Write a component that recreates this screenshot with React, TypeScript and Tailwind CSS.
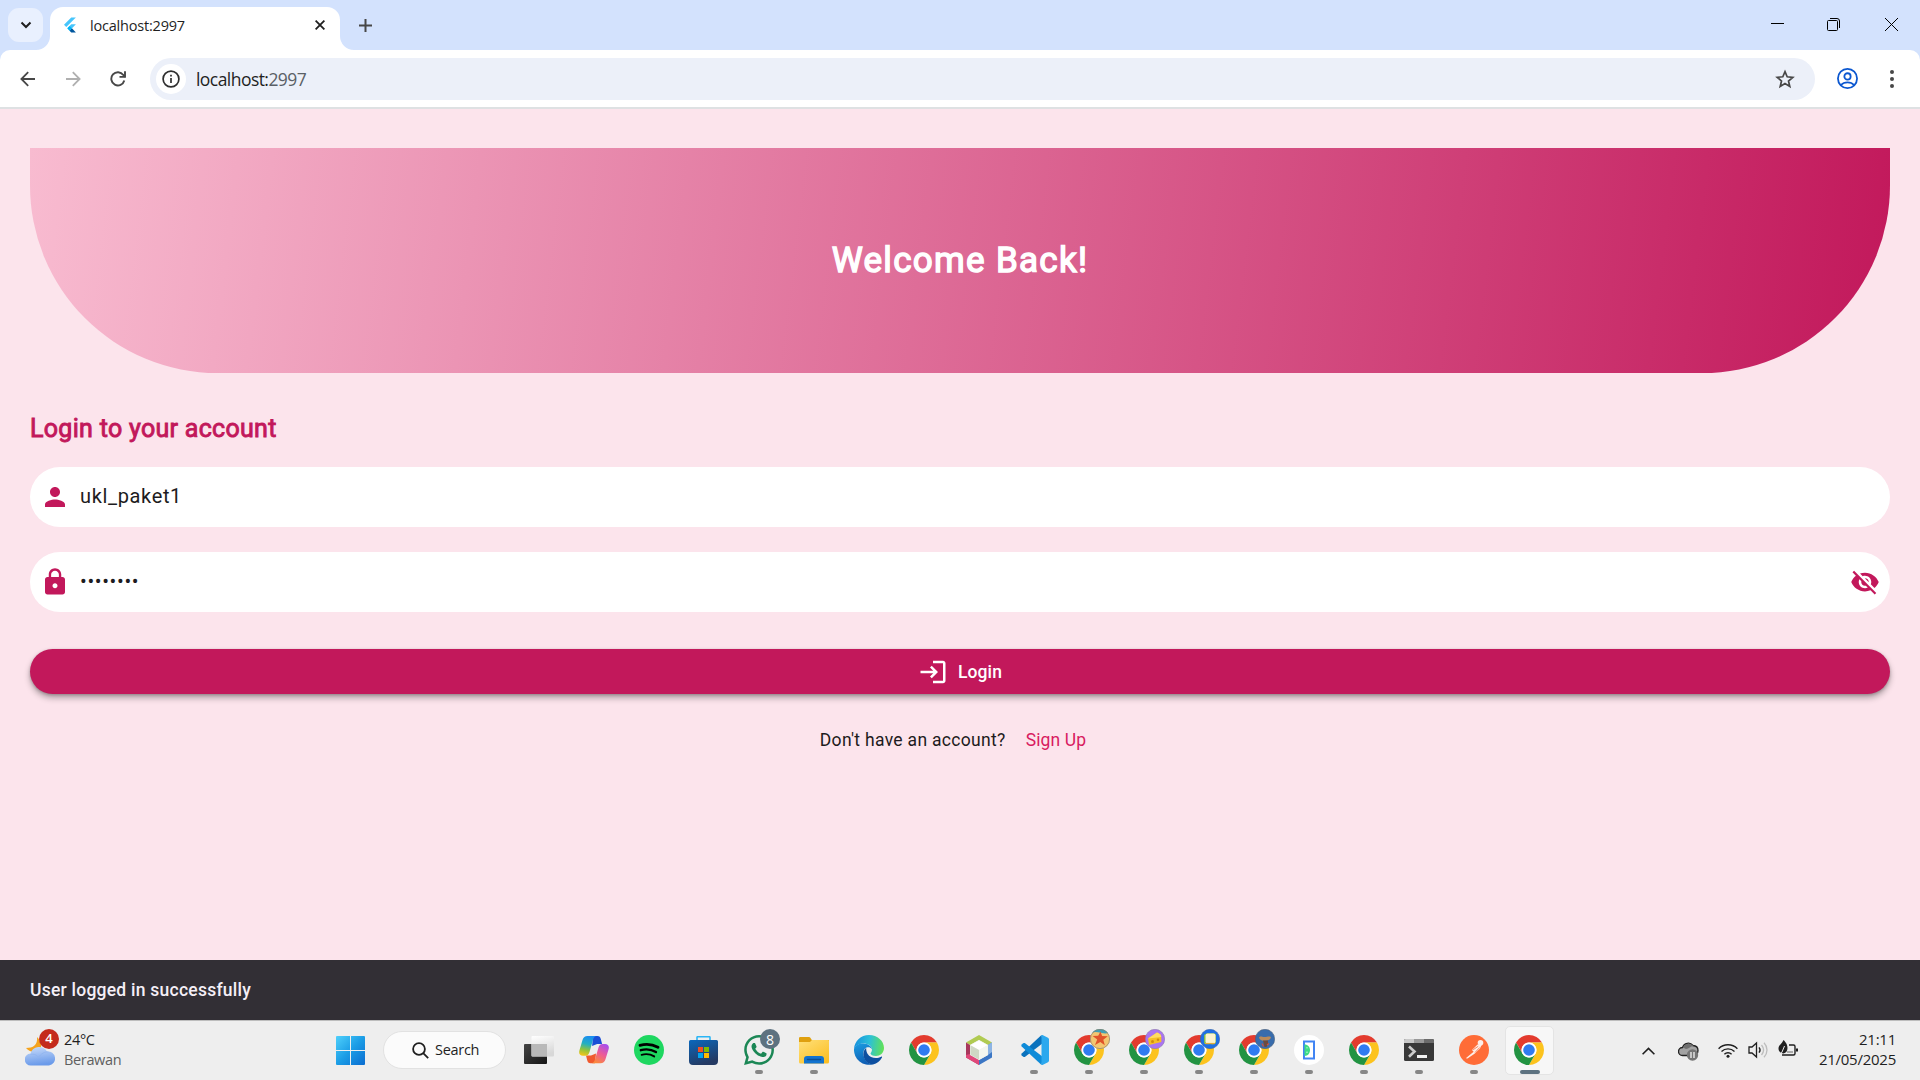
import type { ReactNode } from "react";

const segoe = "font-['Open_Sans','Noto_Sans',sans-serif]";

function MaterialIcon({ d, className = "" }: { d: string; className?: string }) {
  return (
    <svg viewBox="0 0 24 24" className={`size-[30px] shrink-0 fill-current ${className}`}>
      <path d={d} />
    </svg>
  );
}

const person =
  "M12 12c2.21 0 4-1.79 4-4s-1.79-4-4-4-4 1.79-4 4 1.79 4 4 4zm0 2c-2.67 0-8 1.34-8 4v2h16v-2c0-2.66-5.33-4-8-4z";
const lock =
  "M18 8h-1V6c0-2.76-2.24-5-5-5S7 3.24 7 6v2H6c-1.1 0-2 .9-2 2v10c0 1.1.9 2 2 2h12c1.1 0 2-.9 2-2V10c0-1.1-.9-2-2-2zm-6 9c-1.1 0-2-.9-2-2s.9-2 2-2 2 .9 2 2-.9 2-2 2zm3.1-9H8.9V6c0-1.71 1.39-3.1 3.1-3.1 1.71 0 3.1 1.39 3.1 3.1v2z";
const visibilityOff =
  "M12 7c2.76 0 5 2.24 5 5 0 .65-.13 1.26-.36 1.83l2.92 2.92c1.51-1.26 2.7-2.89 3.43-4.75-1.73-4.39-6-7.5-11-7.5-1.4 0-2.74.25-3.98.7l2.16 2.16C10.74 7.13 11.35 7 12 7zM2 4.27l2.28 2.28.46.46C3.08 8.3 1.78 10.02 1 12c1.73 4.39 6 7.5 11 7.5 1.55 0 3.03-.3 4.38-.84l.42.42L19.73 22 21 20.73 3.27 3 2 4.27zM7.53 9.8l1.55 1.55c-.05.21-.08.43-.08.65 0 1.66 1.34 3 3 3 .22 0 .44-.03.65-.08l1.55 1.55c-.67.33-1.41.53-2.2.53-2.76 0-5-2.24-5-5 0-.79.2-1.53.53-2.2zm4.31-.78l3.15 3.15.02-.16c0-1.66-1.34-3-3-3l-.17.01z";
const login =
  "M11 7L9.6 8.4l2.6 2.6H2v2h10.2l-2.6 2.6L11 17l5-5-5-5zm9 12h-8v2h8c1.1 0 2-.9 2-2V5c0-1.1-.9-2-2-2h-8v2h8v14z";

function TabStrip() {
  return (
    <div className="flex h-[50px] items-start bg-[#d3e2fd]">
      <div className="mt-2 ml-2 flex h-[34px] w-[35px] items-center justify-center rounded-[11px] bg-[#e9f0fe]">
        <svg viewBox="0 0 12 8" className="h-2 w-3 fill-none stroke-[#1f1f1f] stroke-2">
          <path d="M1.5 1.5 6 6l4.500-4.500" />
        </svg>
      </div>
      <div className="relative mt-[7px] ml-[7px] flex h-[43px] w-[290px] items-center rounded-t-[13px] bg-white">
        <svg viewBox="0 0 14 14" className="absolute bottom-0 -left-[14px] size-[14px] fill-white">
          <path d="M14 0v14H0A14 14 0 0 0 14 0z" />
        </svg>
        <svg viewBox="0 0 14 14" className="absolute -right-[14px] bottom-0 size-[14px] fill-white">
          <path d="M0 0v14h14A14 14 0 0 1 0 0z" />
        </svg>
        <svg viewBox="0 0 24 30" className="-mt-[1px] mb-[7px] ml-[14px] h-[16px] w-[12px]">
          <path d="M14.500 0 0 14.500l4.600 4.600L23.700 0z" fill="#47c5fb" />
          <path d="M14.500 13.700 6.600 21.600l4.600 4.700 12.600-12.600z" fill="#47c5fb" />
          <path d="m11.200 26.300 3.300 3.700h9.300l-8-8.400z" fill="#00569e" />
          <path d="m6.600 21.700 4.600-4.700 4.600 4.700-4.600 4.600z" fill="#00b5f8" />
        </svg>
        <span className={`${segoe} mb-[6px] ml-[14px] flex-1 text-[14.500px] tracking-[-0.2px] text-[#1f1f1f]`}>
          localhost:2997
        </span>
        <svg viewBox="0 0 10 10" className="mr-[15px] mb-[7px] size-[10px] stroke-[#1f1f1f] stroke-[1.8]">
          <path d="m.6.6 8.800 8.800M9.400.6.6 9.400" />
        </svg>
      </div>
      <svg viewBox="0 0 13 13" className="mt-[19px] ml-[19px] size-[13px] stroke-[#474747] stroke-2">
        <path d="M6.500 0v13M0 6.500h13" />
      </svg>
      <div className="mt-[18px] ml-auto flex items-start pr-[22px] text-black">
        <svg viewBox="0 0 13 13" className="mr-[43px] size-[13px] stroke-current">
          <path d="M0 5.500h13" />
        </svg>
        <svg viewBox="0 0 13 13" className="mr-[45px] size-[13px] fill-none stroke-current">
          <rect x=".5" y="2.500" width="10" height="10" rx="1" />
          <path d="M3 .5h7A2.500 2.500 0 0 1 12.500 3v7" />
        </svg>
        <svg viewBox="0 0 13 13" className="size-[13px] stroke-current">
          <path d="m0 0 13 13M13 0 0 13" />
        </svg>
      </div>
    </div>
  );
}

function Toolbar() {
  return (
    <div className="bg-[#d3e2fd]">
      <div className="flex h-[57px] items-center rounded-t-[10px] bg-white">
        <svg viewBox="0 0 16 16" className="ml-5 size-4 fill-none stroke-[#474747] stroke-[1.8]">
          <path d="M15 8H2M8.200 1.200 1.400 8l6.800 6.800" />
        </svg>
        <svg viewBox="0 0 16 16" className="ml-[29px] size-4 fill-none stroke-[#b0b0b0] stroke-[1.8]">
          <path d="M1 8h13M7.800 1.200 14.600 8l-6.800 6.800" />
        </svg>
        <svg viewBox="0 0 16 16" className="ml-[29px] size-4 fill-none stroke-[#474747] stroke-[1.9]">
          <path d="M14.300 9.500A6.600 6.600 0 1 1 13.300 4L15 5.800" />
          <path d="M15 .3v5.600H9.500" />
        </svg>
        <div className="ml-[24px] flex h-[42px] w-[1665px] items-center rounded-full bg-[#ecf0f9]">
          <div className="ml-[6px] flex size-[30px] items-center justify-center rounded-full bg-white">
            <svg viewBox="0 0 18 18" className="size-[18px] fill-none stroke-[#2f2f2f] stroke-[1.7]">
              <circle cx="9" cy="9" r="7.900" />
              <path d="M9 8v5M9 4.800v1.700" />
            </svg>
          </div>
          <span className={`${segoe} mt-[2px] ml-[10px] flex-1 text-[17.500px] tracking-[-0.55px] text-[#1f1f1f]`}>
            localhost:<span className="text-[#5a5f66]">2997</span>
          </span>
          <svg viewBox="0 0 20 20" className="mr-5 size-5 fill-none stroke-[#474747] stroke-[1.7]">
            <path d="m10 2.600 2.200 5.200 5.600.5-4.300 3.700 1.300 5.500-4.800-2.900-4.800 2.900 1.300-5.500-4.300-3.700 5.600-.5z" />
          </svg>
        </div>
        <svg viewBox="0 0 20 20" className="ml-[22px] size-[21px] fill-none stroke-[#0b57d0] stroke-[1.7]">
          <circle cx="10" cy="10" r="9.100" />
          <circle cx="10" cy="8" r="3" />
          <path d="M3.800 16.200c3-3.400 9.400-3.400 12.400 0" />
        </svg>
        <svg viewBox="0 0 4 18" className="ml-[32px] h-[18px] w-1 fill-[#474747]">
          <circle cx="2" cy="2" r="2" />
          <circle cx="2" cy="9" r="2" />
          <circle cx="2" cy="16" r="2" />
        </svg>
      </div>
      <div className="h-[2px] bg-[#dee1e3]" />
    </div>
  );
}

function LoginPage() {
  return (
    <main className="flex h-[911px] flex-col bg-[#fce4ec] font-['Roboto',sans-serif]">
      <div className="flex flex-1 flex-col px-[30px] pt-[39px]">
        <header className="flex h-[225px] items-center justify-center rounded-b-[187.500px] bg-[linear-gradient(96.9deg,#f8bbd0,#c2185b)]">
          <h1 className="text-[35px] leading-[42px] font-normal tracking-[1.300px] text-white [-webkit-text-stroke:1.4px_white]">
            Welcome Back!
          </h1>
        </header>
        <h2 className="mt-[38px] h-[36px] text-[25px] leading-[36px] font-normal tracking-[0.3px] text-[#c2185b] [-webkit-text-stroke:0.9px_#c2185b]">
          Login to your account
        </h2>
        <div className="mt-[20px] flex h-[60px] items-center rounded-[30px] bg-white px-[10px]">
          <MaterialIcon d={person} className="text-[#c2185b]" />
          <span className="mb-[2px] ml-[10px] text-[20px] tracking-[0.65px] text-[#1d1b20]">ukl_paket1</span>
        </div>
        <div className="mt-[25px] flex h-[60px] items-center rounded-[30px] bg-white px-[10px]">
          <MaterialIcon d={lock} className="text-[#c2185b]" />
          <span className="mb-[2px] ml-[10px] flex-1 text-[20px] tracking-[0.65px] text-[#1d1b20]">••••••••</span>
          <MaterialIcon d={visibilityOff} className="text-[#c2185b]" />
        </div>
        <button className="mt-[37px] flex h-[45px] items-center justify-center rounded-full bg-[#c2185b] text-white shadow-[0_4px_6px_rgba(0,0,0,0.3),0_1px_3px_rgba(0,0,0,0.2)]">
          <MaterialIcon d={login} />
          <span className="mt-[2px] ml-[10px] text-[17.500px] font-medium tracking-[0.125px]">Login</span>
        </button>
        <p className="mt-[34px] flex justify-center gap-5 pr-[14px] text-[17.500px] leading-[25px] tracking-[0.310px] text-[#1d1b20]">
          <span>Don't have an account?</span>
          <a className="tracking-[0.125px] text-[#d81b60]">Sign Up</a>
        </p>
      </div>
      <div className="flex h-[60px] items-center bg-[#322f35] px-[30px] text-[17.500px] font-medium tracking-[0.240px] text-[#f5eff7]">
        User logged in successfully
      </div>
    </main>
  );
}

function Chrome() {
  return (
    <svg viewBox="0 0 48 48" className="size-[30px]">
      <path d="M3.220 12A24 24 0 0 1 44.780 12L24 12A12 12 0 0 0 13.610 30Z" fill="#e33b2e" />
      <path d="M44.780 12A24 24 0 0 1 24 48L34.390 30A12 12 0 0 0 24 12Z" fill="#fcc31e" />
      <path d="M24 48A24 24 0 0 1 3.220 12L13.610 30A12 12 0 0 0 34.390 30Z" fill="#229342" />
      <circle cx="24" cy="24" r="12" fill="#fff" />
      <circle cx="24" cy="24" r="9.300" fill="#2f7bf0" />
    </svg>
  );
}

function TaskbarApp({ children, running, badge }: { children: ReactNode; running?: boolean; badge?: ReactNode }) {
  return (
    <div className="relative flex h-[59px] w-[55px] items-center justify-center pb-px">
      {children}
      {badge && <div className="absolute top-[8px] left-[28.500px] size-[20px]">{badge}</div>}
      {running && <div className="absolute bottom-[6px] left-[23.500px] h-1 w-2 rounded-full bg-[#868686]" />}
    </div>
  );
}

function WindowsLogo() {
  return (
    <svg viewBox="0 0 29 29" className="mt-px size-[29px]">
      <defs>
        <linearGradient id="win" gradientUnits="userSpaceOnUse" x1="0" y1="0" x2="29" y2="29">
          <stop stopColor="#4fd0fb" />
          <stop offset=".5" stopColor="#1b9de6" />
          <stop offset="1" stopColor="#0a6cd0" />
        </linearGradient>
      </defs>
      <path
        fill="url(#win)"
        d="M1 0h13v14H0V1a1 1 0 0 1 1-1zM15 0h13a1 1 0 0 1 1 1v13H15zM0 15h14v14H1a1 1 0 0 1-1-1zM15 15h14v13a1 1 0 0 1-1 1H15z"
      />
    </svg>
  );
}

function TaskView() {
  return (
    <svg viewBox="0 0 30 28" className="h-[28px] w-[30px]">
      <defs>
        <linearGradient id="tvd" x2="1" y2="1">
          <stop stopColor="#444" />
          <stop offset="1" stopColor="#151515" />
        </linearGradient>
        <linearGradient id="tvl" x2=".3" y2="1">
          <stop stopColor="#fff" />
          <stop offset="1" stopColor="#d8d8d8" />
        </linearGradient>
      </defs>
      <rect y="8" width="23" height="20" rx="1" fill="url(#tvd)" />
      <rect x="7.500" y="0" width="22.500" height="20.500" rx="1" fill="url(#tvl)" />
      <path d="M7.500 8H23v12.500H8.500a1 1 0 0 1-1-1z" fill="#b9b9b9" />
    </svg>
  );
}

function Copilot() {
  return (
    <svg viewBox="0 0 30 28" className="h-[28px] w-[30px]">
      <defs>
        <linearGradient id="cpa" x1=".5" y1="0" x2=".3" y2="1">
          <stop stopColor="#1b8df0" />
          <stop offset=".4" stopColor="#23b0c0" />
          <stop offset=".7" stopColor="#8fc33c" />
          <stop offset="1" stopColor="#f5c518" />
        </linearGradient>
        <linearGradient id="cpb" x1=".8" y1="0" x2=".3" y2="1">
          <stop stopColor="#a44df0" />
          <stop offset=".5" stopColor="#ec5b98" />
          <stop offset="1" stopColor="#fb8a3c" />
        </linearGradient>
      </defs>
      <path d="M14 0h4.500c2 0 2.800 1.200 3.300 3l1.300 5h-5l-5 2z" fill="#1a4fd6" />
      <path d="M16 27.300h-4.500c-2 0-2.800-1.200-3.300-3L7 19.500h5l5-2z" fill="#f0592e" />
      <path
        d="M8.500 0H17c-2 .6-2.600 2.400-3.200 4.500l-3.300 11.600c-.7 2.300-1.700 3.700-4 3.700H4c-3 0-4.500-2.200-3.600-5.300L3.500 4C4.300 1.400 6 0 8.500 0z"
        fill="url(#cpa)"
      />
      <path
        d="M21.500 27.300H13c2-.6 2.600-2.400 3.200-4.500l3.300-11.300c.7-2.300 1.700-3.500 4-3.500H26c3 0 4.500 2.200 3.600 5.300l-3.100 10c-.8 2.600-2.500 4-5 4z"
        fill="url(#cpb)"
      />
    </svg>
  );
}

function Spotify() {
  return (
    <svg viewBox="0 0 30 30" className="size-[30px] fill-none stroke-black" strokeLinecap="round">
      <circle cx="15" cy="15" r="15" fill="#1ed760" stroke="none" />
      <path d="M6 10.300c6-1.700 12.500-1.100 18 2" strokeWidth="2.800" />
      <path d="M6.800 15.200c5.200-1.500 10.600-.9 15.200 1.900" strokeWidth="2.300" />
      <path d="M7.600 19.800c4.400-1.200 8.800-.7 12.600 1.600" strokeWidth="1.900" />
    </svg>
  );
}

function Store() {
  return (
    <svg viewBox="0 0 29 29" className="mt-px mr-px size-[29px]">
      <defs>
        <linearGradient id="store" x2=".4" y2="1">
          <stop stopColor="#0a68bd" />
          <stop offset="1" stopColor="#243a63" />
        </linearGradient>
      </defs>
      <path d="M8 5V1.500a.8.800 0 0 1 .8-.8h11.400a.8.800 0 0 1 .8.800V5" fill="none" stroke="#2bb5f5" strokeWidth="1.600" />
      <path d="M0 5.500A1.500 1.500 0 0 1 1.500 4h26A1.500 1.500 0 0 1 29 5.500V25a4 4 0 0 1-4 4H4a4 4 0 0 1-4-4z" fill="url(#store)" />
      <path d="M9 11h5v5H9z" fill="#f25022" />
      <path d="M15 11h5v5h-5z" fill="#7fba00" />
      <path d="M9 17h5v5H9z" fill="#00a4ef" />
      <path d="M15 17h5v5h-5z" fill="#ffb900" />
    </svg>
  );
}

function WhatsApp() {
  return (
    <svg viewBox="0 0 24 24" className="size-[30px] fill-[#1b8755]">
      <path d="M17.472 14.382c-.297-.149-1.758-.867-2.030-.967-.273-.099-.471-.148-.670.150-.197.297-.767.966-.940 1.164-.173.199-.347.223-.644.075-.297-.150-1.255-.463-2.390-1.475-.883-.788-1.480-1.761-1.653-2.059-.173-.297-.018-.458.130-.606.134-.133.298-.347.446-.520.149-.174.198-.298.298-.497.099-.198.050-.371-.025-.520-.075-.149-.669-1.612-.916-2.207-.242-.579-.487-.500-.669-.510-.173-.008-.371-.010-.570-.010-.198 0-.520.074-.792.372-.272.297-1.040 1.016-1.040 2.479 0 1.462 1.065 2.875 1.213 3.074.149.198 2.096 3.200 5.077 4.487.709.306 1.262.489 1.694.625.712.227 1.360.195 1.871.118.571-.085 1.758-.719 2.006-1.413.248-.694.248-1.289.173-1.413-.074-.124-.272-.198-.570-.347m-5.421 7.403h-.004a9.870 9.870 0 0 1-5.031-1.378l-.361-.214-3.741.982.998-3.648-.235-.374a9.860 9.860 0 0 1-1.510-5.260c.001-5.450 4.436-9.884 9.888-9.884 2.640 0 5.122 1.030 6.988 2.898a9.825 9.825 0 0 1 2.893 6.994c-.003 5.450-4.437 9.884-9.885 9.884m8.413-18.297A11.815 11.815 0 0 0 12.050 0C5.495 0 .160 5.335.157 11.892c0 2.096.547 4.142 1.588 5.945L.057 24l6.305-1.654a11.882 11.882 0 0 0 5.683 1.448h.005c6.554 0 11.890-5.335 11.893-11.893a11.821 11.821 0 0 0-3.480-8.413z" />
    </svg>
  );
}

function Explorer() {
  return (
    <svg viewBox="0 0 30 27" className="mt-px h-[27px] w-[30px]">
      <defs>
        <linearGradient id="folder" x2=".8" y2="1">
          <stop stopColor="#ffe07a" />
          <stop offset="1" stopColor="#fbbf24" />
        </linearGradient>
      </defs>
      <path d="M0 1.200A1.200 1.200 0 0 1 1.200 0h8.300c1 0 1.500.3 2 1l1.300 2H30v5H0z" fill="#dfa00f" />
      <path d="M0 5h11l2-2h16a1 1 0 0 1 1 1v21a1.500 1.500 0 0 1-1.500 1.500h-27A1.500 1.500 0 0 1 0 25z" fill="url(#folder)" />
      <path d="M5 26.500V22a3 3 0 0 1 3-3h14a3 3 0 0 1 3 3v4.500z" fill="#1273cf" />
      <path d="M8.500 22.500h13" stroke="#0c4f94" strokeWidth="1.300" strokeLinecap="round" />
    </svg>
  );
}

function Edge() {
  return (
    <svg viewBox="0 0 30 30" className="size-[30px]">
      <defs>
        <linearGradient id="edgeTop" x1="0" y1=".4" x2="1" y2=".5">
          <stop stopColor="#1590de" />
          <stop offset=".5" stopColor="#2cc0d8" />
          <stop offset="1" stopColor="#62e255" />
        </linearGradient>
        <linearGradient id="edgeLeft" x2=".3" y2="1">
          <stop stopColor="#1b9de2" />
          <stop offset="1" stopColor="#0f5fb5" />
        </linearGradient>
      </defs>
      <path d="M0 14C.5 6 7 0 15 0c8.500 0 15 6 15 13 0 5-4 8-8 8-3.500 0-5.500-1.500-5.500-2.600 0-.8 1.500-1.500 1.500-4C18 11 14 8.500 9.500 8.500 4.500 8.500 1.200 11 0 14z" fill="url(#edgeTop)" />
      <path d="M0 14C1 10.500 4.800 8.500 9 8.500c5 0 9 3 9 6-1-2-3-2.500-4.500-2.200C10 13 9 17 9.500 20c.8 5 5 9.300 9.500 9.300A15 15 0 0 1 0 14z" fill="url(#edgeLeft)" />
      <path d="M12.200 12.800C9.500 15 8.800 18.500 9.800 22c1.200 4.500 5 7.500 9.200 7.400 4-1 7-3.500 9-7 .3-.7-.2-1-.8-.7-4.500 2.500-11 1.500-13.700-3-1.100-2-1.400-4-1.300-5.900z" fill="#0d4fa0" />
    </svg>
  );
}

function NetBeans() {
  return (
    <svg viewBox="0 0 26 30" className="h-[30px] w-[26px]">
      <path d="M13 0 26 7.500 22 10l-9-5-9 5-4-2.500z" fill="#b0cb52" />
      <path d="M0 7.500 4 10v10l9 5v5L0 22.500z" fill="#a8375c" />
      <path d="M0 20l4-1 9 6v5L0 22.500z" fill="#e0487a" />
      <path d="M26 7.500 22 10v10l-9 5v5l13-7.500z" fill="#3b76c4" />
      <path d="M26 7.500 22 10v10l4-3z" fill="#8cb4e4" />
      <path d="M4 10l9-5 9 5v10l-9 5-9-5z" fill="#eef2ea" />
      <path d="m13 5.500 8.500 4.700L13 15l-8.500-4.800z" fill="#fff" />
      <path d="M4.500 10.200 13 15v9.500l-8.500-4.800z" fill="#cfd8c4" />
      <path d="M21.500 10.200 13 15v9.500l8.500-4.800z" fill="#f3f6ef" />
    </svg>
  );
}

function VsCode() {
  return (
    <svg viewBox="0 0 30 30" className="size-[30px]">
      <path d="m22.500 0-19.800 18.600a1.300 1.300 0 0 0 0 1.800l1.600 1.400c.5.400 1 .4 1.500.1L24 8z" fill="#0a72bd" />
      <path d="m22.500 30-19.800-18.600a1.300 1.300 0 0 1 0-1.800l1.600-1.400c.5-.4 1-.4 1.500-.1L24 22z" fill="#0f8bd8" />
      <path d="M22.500 0c.4-.1.700-.1 1 .1L29 2.800c.6.300 1 .9 1 1.500v21.400c0 .6-.4 1.200-1 1.500l-5.500 2.700c-.3.200-.6.200-1 .1z" fill="#2ba8ee" />
    </svg>
  );
}

function AndroidDevice() {
  return (
    <svg viewBox="0 0 30 30" className="size-[30px]">
      <circle cx="15" cy="15" r="15" fill="#fff" />
      <rect x="10" y="6.500" width="10" height="17" fill="#fff" stroke="#4285f4" strokeWidth="2" />
      <path d="M10.500 9.500c3.500 0 5.500 2.500 5.500 5.500s-2 6-5.500 6z" fill="#3ddc84" />
      <circle cx="13" cy="12.800" r=".6" fill="#fff" />
      <circle cx="13" cy="17.200" r=".6" fill="#fff" />
    </svg>
  );
}

function Terminal() {
  return (
    <svg viewBox="0 0 30 22" className="h-[22px] w-[30px]">
      <rect width="30" height="22" rx="1.500" fill="#383838" />
      <path d="M0 4V1.500A1.500 1.500 0 0 1 1.500 0H10v4z" fill="#c9c9c9" />
      <path d="M10 0h10v4H10z" fill="#999" />
      <path d="M20 0h8.500A1.500 1.500 0 0 1 30 1.500V4H20z" fill="#6b6b6b" />
      <path d="m5 7.500 5.500 5L5 17.800" fill="none" stroke="#ccc" strokeWidth="2.600" />
      <path d="M13 16h10v3H13z" fill="#f2f2f2" />
    </svg>
  );
}

function Postman() {
  return (
    <svg viewBox="0 0 30 30" className="size-[30px]">
      <circle cx="15" cy="15" r="15" fill="#ff6c37" />
      <circle cx="21.500" cy="7.800" r="2.800" fill="#fdeee8" />
      <path d="M18.500 9.500 13 15l1.600 1.700-7.800 6.500 1.700.3 7-4.800 5.500-5.200 1.500-3.500z" fill="#fdeee8" />
      <path d="m14.200 14.700 5-3.400M16 17.500l4.700-5" stroke="#ff6c37" strokeWidth=".8" />
    </svg>
  );
}

function StarfishBadge() {
  return (
    <svg viewBox="0 0 20 20">
      <circle cx="10" cy="10" r="10" fill="#f3c671" />
      <path d="M2 4A10 10 0 0 1 18 4C14 6 6 1 2 4z" fill="#3f9fb5" />
      <path d="m10.500 2.500 1.600 4.600 5.700.2-4.500 3.400 1.500 5.600-4.500-3.200-5.300 2.800 2.200-5.300-4.600-3.600 5.600-.2z" fill="#e0532a" />
      <circle cx="10" cy="10" r="9.600" fill="none" stroke="#8b8371" strokeWidth=".7" />
    </svg>
  );
}

function CheeseBadge() {
  return (
    <svg viewBox="0 0 20 20">
      <circle cx="10" cy="10" r="9.700" fill="#a974f2" stroke="#8b79a8" strokeWidth=".6" />
      <path d="m3 9.500 9-6c2.500.5 4 2.500 4.300 4.500v5L4 16z" fill="#f5c027" />
      <path d="m3 9.500 9-6c2.500.5 4 2.500 4.300 4.500z" fill="#ffdc62" />
      <circle cx="7.500" cy="12.500" r="1.500" fill="#cf8c10" />
      <circle cx="13" cy="10.800" r="1.300" fill="#cf8c10" />
    </svg>
  );
}

function SandwichBadge() {
  return (
    <svg viewBox="0 0 20 20">
      <circle cx="10" cy="10" r="9.700" fill="#1f6fe5" stroke="#3b66a8" strokeWidth=".6" />
      <path d="M4 6c2-2 4-2 6-1.500C12 4 15 4 16 5.500v8C15 16 12 15.500 10 15c-2 .6-5 .6-6-1z" fill="#7fbf4d" />
      <rect x="5.500" y="4.500" width="10" height="10" rx="2" fill="#fbf3d0" />
      <path d="M5 14.500h10" stroke="#e2a93c" strokeWidth="1.200" />
    </svg>
  );
}

function HorseBadge() {
  return (
    <svg viewBox="0 0 20 20">
      <circle cx="10" cy="10" r="9.700" fill="#386cac" stroke="#4d6179" strokeWidth=".6" />
      <path d="M4 8.500c1-2 3-.5 5.500-.5 3 0 4-1 6.500 0-.5 2.500-2.500 3.800-6 3.800S4.500 11 4 8.500z" fill="#b98a5a" />
      <path d="M8 11.500h5v3l-1.500 3.500h-2z" fill="#6d4a3d" />
      <path d="M7 14.500l1.500 3M12 16l2-1.500" stroke="#d0503c" strokeWidth="1.200" />
    </svg>
  );
}

function SystemTray() {
  return (
    <div className={`${segoe} ml-auto flex items-center text-[#1f1f1f]`}>
      <svg viewBox="0 0 13 8" className="h-2 w-[13px] fill-none stroke-current stroke-[1.6]">
        <path d="M.6 7.200 6.500 1.400l5.900 5.800" />
      </svg>
      <svg viewBox="0 0 21 19" className="mt-[2px] ml-[23px] h-[19px] w-[21px]">
        <path d="M4.500 13.500a4 4 0 0 1 0-8 6 6 0 0 1 10.500-2c3 .2 5 2.300 5 5s-2 5-4.500 5z" fill="#a3a3a3" stroke="#222" strokeWidth="1.300" />
        <path d="M5 5.500a6 6 0 0 1 10-2l.5.500c-3 0-4.500 3-7.500 3z" fill="#6f6f6f" />
        <circle cx="14.500" cy="13" r="5.700" fill="#757575" />
        <path d="M13 10v6M16 10v6" stroke="#fff" strokeWidth="1.200" />
      </svg>
      <svg viewBox="0 0 20 15" className="-mt-px ml-[19px] h-[15px] w-5 fill-none stroke-current stroke-[1.4]">
        <path d="M.6 5.700c5.200-5.200 13.600-5.200 18.800 0M3.500 8.600c3.600-3.600 9.400-3.600 13 0M6.400 11.200c2-2 5.200-2 7.200 0" />
        <circle cx="10" cy="13.300" r="1.500" className="fill-current stroke-none" />
      </svg>
      <svg viewBox="0 0 20 18" className="-mt-px ml-[10px] h-[18px] w-5 fill-none stroke-current stroke-[1.300]">
        <path d="M1 6v6h3l4.500 4V2L4 6z" />
        <path d="M11 6.300c1.200 1.500 1.200 3.900 0 5.400" />
        <path d="M13.500 4c2.500 3 2.500 7 0 10M16 1.800c4 4.300 4 10.100 0 14.400" stroke="#bdbdbd" />
      </svg>
      <svg viewBox="0 0 20 17" className="-mt-[4px] ml-[10px] h-[17px] w-5 fill-none stroke-current stroke-[1.400]">
        <path d="M11 5h4.500A1.500 1.500 0 0 1 17 6.500v7a1.500 1.500 0 0 1-1.500 1.500H4" />
        <path d="M18 8.500h2v3h-2z" className="fill-current stroke-none" />
        <path d="M5.500 0C7 1.500 9.500 4 9.500 8c0 3-1.500 5-4 5.500-3-.3-5-2-5-5C.5 5 4 4 5.500 0z" className="fill-current stroke-none" />
        <path d="M6.500 6 4 12l-3 4" stroke="#eee" strokeWidth="1" />
        <path d="M9 12h6" stroke="#aaa" strokeWidth="2" />
      </svg>
      <div className="mr-6 -mt-[4px] ml-[20px] w-[78px] text-right text-[15px] leading-5 tracking-[-0.25px] whitespace-nowrap">
        <div>21:11</div>
        <div>21/05/2025</div>
      </div>
    </div>
  );
}

function Taskbar() {
  return (
    <footer className="flex h-[60px] items-center border-t border-[#bdbdbd] bg-[#eeeeee]">
      <div className={`${segoe} flex w-[323px] items-center`}>
        <div className="relative ml-[25px] h-[38px] w-[34px]">
          <svg viewBox="0 0 30 30" className="absolute top-[4px] left-0 size-[30px]">
            <defs>
              <linearGradient id="cloud" x2=".2" y2="1">
                <stop stopColor="#c9dcfa" />
                <stop offset="1" stopColor="#6b9bea" />
              </linearGradient>
            </defs>
            <path d="M12 1c4 4 6 10 2 14.500-5 2-10 0-13-3.500 7 0 12-3 11-11z" fill="#f5a31d" />
            <path d="M6 29.500a6 6 0 0 1-.5-12A9 9 0 0 1 22 15.500a7 7 0 0 1 2 14z" fill="url(#cloud)" />
            <path d="M5.500 18.500C9 17.500 12 19 13.500 21.500 16 17.500 20 15.500 23.500 16" fill="none" stroke="#8fb2ee" strokeWidth=".8" />
          </svg>
          <div className="absolute -top-[3px] left-[14px] flex size-[20px] items-center justify-center rounded-full bg-[#c42b1c] text-[13px] font-semibold text-white">
            4
          </div>
        </div>
        <div className="-mt-[2px] ml-[5px] text-[14.500px] leading-5 tracking-[-0.35px]">
          <div className="text-[#1f1f1f]">24°C</div>
          <div className="text-[#5f5f5f]">Berawan</div>
        </div>
      </div>
      <TaskbarApp>
        <WindowsLogo />
      </TaskbarApp>
      <div
        className={`${segoe} mr-[5.500px] -mt-px ml-[5px] flex h-[38px] w-[123px] items-center rounded-full border border-[#e2e2e2] bg-[#fbfbfb] pl-[28px] text-[14.500px] tracking-[-0.3px] text-[#1f1f1f]`}
      >
        <svg viewBox="0 0 17 17" className="mr-[6px] size-[17px] fill-none stroke-current stroke-[1.800]">
          <circle cx="7" cy="7" r="5.900" />
          <path d="m11.200 11.200 5 5" />
        </svg>
        Search
      </div>
      <TaskbarApp>
        <TaskView />
      </TaskbarApp>
      <TaskbarApp>
        <Copilot />
      </TaskbarApp>
      <TaskbarApp>
        <Spotify />
      </TaskbarApp>
      <TaskbarApp>
        <Store />
      </TaskbarApp>
      <TaskbarApp
        running
        badge={
          <div className={`${segoe} flex size-5 items-center justify-center rounded-full bg-[#5d7280] text-[14px] text-white`}>8</div>
        }
      >
        <WhatsApp />
      </TaskbarApp>
      <TaskbarApp running>
        <Explorer />
      </TaskbarApp>
      <TaskbarApp>
        <Edge />
      </TaskbarApp>
      <TaskbarApp>
        <Chrome />
      </TaskbarApp>
      <TaskbarApp>
        <NetBeans />
      </TaskbarApp>
      <TaskbarApp running>
        <VsCode />
      </TaskbarApp>
      <TaskbarApp running badge={<StarfishBadge />}>
        <Chrome />
      </TaskbarApp>
      <TaskbarApp running badge={<CheeseBadge />}>
        <Chrome />
      </TaskbarApp>
      <TaskbarApp running badge={<SandwichBadge />}>
        <Chrome />
      </TaskbarApp>
      <TaskbarApp running badge={<HorseBadge />}>
        <Chrome />
      </TaskbarApp>
      <TaskbarApp running>
        <AndroidDevice />
      </TaskbarApp>
      <TaskbarApp running>
        <Chrome />
      </TaskbarApp>
      <TaskbarApp running>
        <Terminal />
      </TaskbarApp>
      <TaskbarApp running>
        <Postman />
      </TaskbarApp>
      <div className="relative mx-[3px] flex size-[49px] items-center justify-center rounded-[5px] border border-[#e4e4e4] bg-[#f7f7f7] pb-px">
        <Chrome />
        <div className="absolute bottom-0 left-[14px] h-1 w-5 rounded-full bg-[#5d7280]" />
      </div>
      <SystemTray />
    </footer>
  );
}

export default function App() {
  return (
    <div className="flex h-[1080px] w-[1920px] flex-col overflow-hidden">
      <TabStrip />
      <Toolbar />
      <LoginPage />
      <Taskbar />
    </div>
  );
}
